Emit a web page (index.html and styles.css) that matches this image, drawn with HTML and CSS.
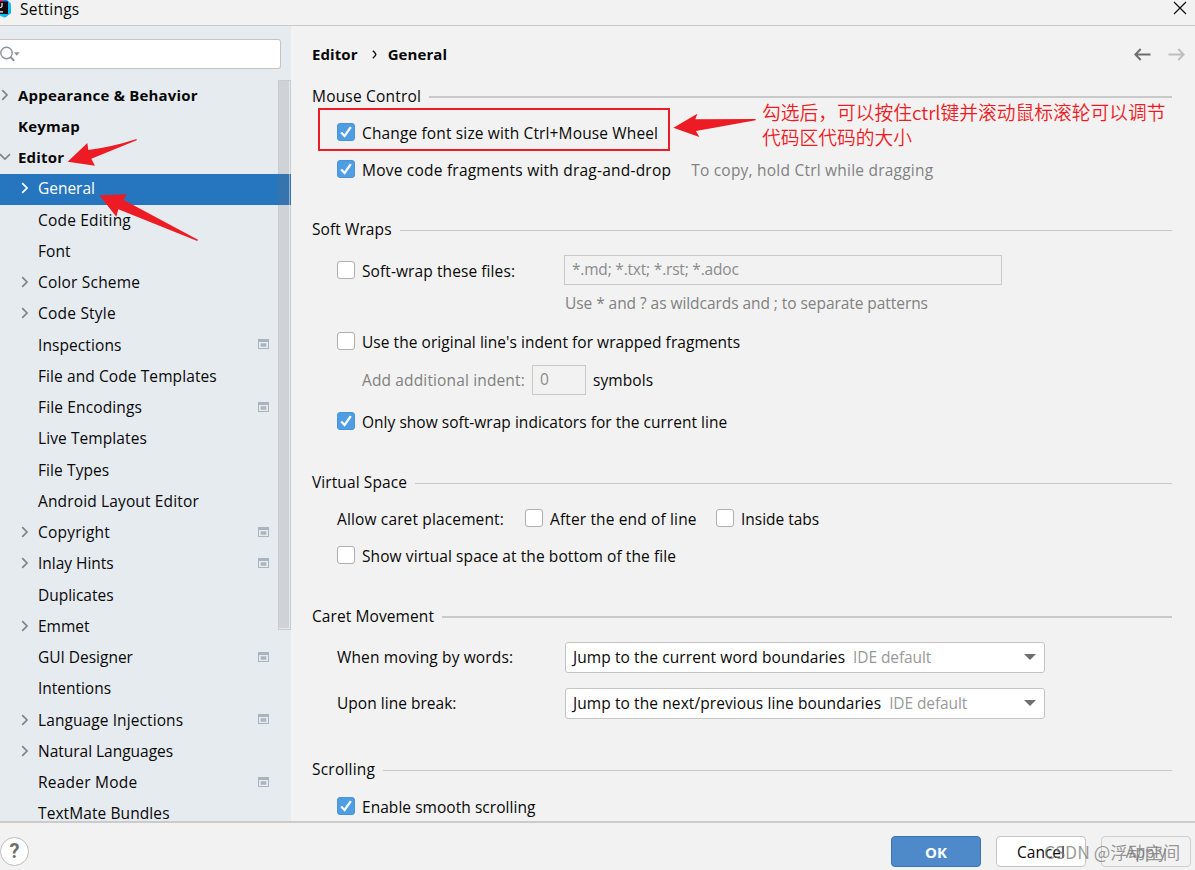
FILE: index.html
```html
<!DOCTYPE html>
<html lang="en">
<head>
<meta charset="utf-8">
<title>Settings</title>
<link rel="stylesheet" href="styles.css">
</head>
<body>
<svg class="defs" width="0" height="0" aria-hidden="true">
  <symbol id="chev" viewBox="0 0 8 12"><path d="M1.2 1.2 6 6 1.2 10.8" fill="none" stroke="currentColor" stroke-width="1.7"/></symbol>
  <symbol id="chev-down" viewBox="0 0 12 8"><path d="M1 1.2 6 6 11 1.2" fill="none" stroke="currentColor" stroke-width="1.7"/></symbol>
  <symbol id="project" viewBox="0 0 11 11"><path fill="#a9b4bd" fill-rule="evenodd" d="M0 0H11V10H0ZM1 3V9H10V3Z"/><path fill="#a9b4bd" d="M2.7 4.3H8.3V7.7H2.7Z"/></symbol>
  <symbol id="tick" viewBox="1 1 16 16"><path d="M4.2 9.5 7.6 13 13.8 4.2" fill="none" stroke="#fff" stroke-width="2.3"/></symbol>
</svg>
<div class="window">
  <header class="titlebar">
    <svg class="logo" width="11" height="18" viewBox="0 0 11 18"><path fill="#087cfa" d="M0 0H7L10.5 3.5 11 13 5 17.5 0 15Z"/><path fill="#07c3f2" d="M8 1 10.5 4V13L4 17.5 0 15.5V14L8 14Z"/><path fill="#fe2857" d="M0 0H4L0 3Z"/><path fill="#160a12" d="M0 1.5H8V14H0Z"/><path d="M2 3V6.3Q2 7.5 0 7.5M0 11.8H3" fill="none" stroke="#fff" stroke-width="1.2"/></svg>
    <span class="title">Settings</span>
    <svg class="close" width="14" height="14" viewBox="0 0 14 14"><path d="M1 1 13 13M13 1 1 13" stroke="#111" stroke-width="1.3"/></svg>
  </header>

  <div class="body">
    <aside class="sidebar">
      <div class="search">
        <svg width="20" height="17" viewBox="0 0 20 17"><circle cx="6.5" cy="7" r="5.7" fill="none" stroke="#8a949c" stroke-width="1.4"/><path d="M10.5 11 14.2 14.7" stroke="#8a949c" stroke-width="2"/><path d="M14 6.3H19.6L16.8 9.8Z" fill="#8a949c"/></svg>
      </div>
      <div class="tree">
        <div class="node top"><svg class="exp"><use href="#chev"/></svg><span>Appearance &amp; Behavior</span></div>
        <div class="node top"><span>Keymap</span></div>
        <div class="node top"><svg class="exp down"><use href="#chev-down"/></svg><span>Editor</span></div>
        <div class="node selected"><svg class="exp"><use href="#chev"/></svg><span class="tight">General</span></div>
        <div class="node"><span class="ls19">Code Editing</span></div>
        <div class="node"><span>Font</span></div>
        <div class="node"><svg class="exp"><use href="#chev"/></svg><span class="ls19">Color Scheme</span></div>
        <div class="node"><svg class="exp"><use href="#chev"/></svg><span class="ls22">Code Style</span></div>
        <div class="node"><span>Inspections</span><svg class="proj"><use href="#project"/></svg></div>
        <div class="node"><span>File and Code Templates</span></div>
        <div class="node"><span class="ls14">File Encodings</span><svg class="proj"><use href="#project"/></svg></div>
        <div class="node"><span>Live Templates</span></div>
        <div class="node"><span>File Types</span></div>
        <div class="node"><span class="ls14">Android Layout Editor</span></div>
        <div class="node"><svg class="exp"><use href="#chev"/></svg><span class="ls22">Copyright</span><svg class="proj"><use href="#project"/></svg></div>
        <div class="node"><svg class="exp"><use href="#chev"/></svg><span class="tight">Inlay Hints</span><svg class="proj"><use href="#project"/></svg></div>
        <div class="node"><span class="tight">Duplicates</span></div>
        <div class="node"><svg class="exp"><use href="#chev"/></svg><span class="tight">Emmet</span></div>
        <div class="node"><span class="tight">GUI Designer</span><svg class="proj"><use href="#project"/></svg></div>
        <div class="node"><span class="tight">Intentions</span></div>
        <div class="node"><svg class="exp"><use href="#chev"/></svg><span>Language Injections</span><svg class="proj"><use href="#project"/></svg></div>
        <div class="node"><svg class="exp"><use href="#chev"/></svg><span class="tight">Natural Languages</span></div>
        <div class="node"><span class="ls22">Reader Mode</span><svg class="proj"><use href="#project"/></svg></div>
        <div class="node"><span>TextMate Bundles</span></div>
        <div class="scrollbar"></div>
      </div>
    </aside>

    <main class="content">
      <div class="crumbs">
        <span>Editor</span><svg class="crumb-sep" width="5" height="9" viewBox="0 0 5 9"><path d="M.8.8Q3.8 3.5 3.8 4.5T.8 8.2" fill="none" stroke="#111" stroke-width="1.4"/></svg><span>General</span>
        <div class="nav">
          <svg width="17" height="13" viewBox="0 0 17 13"><path d="M16.5 6.5H1.5M6.7 1 1.3 6.5 6.7 12" fill="none" stroke="#6e6e6e" stroke-width="2"/></svg>
          <svg width="17" height="13" viewBox="0 0 17 13"><path d="M.5 6.5H15.5M10.3 1 15.7 6.5 10.3 12" fill="none" stroke="#bebebe" stroke-width="2"/></svg>
        </div>
      </div>

      <section>
        <h2 class="head thick ls19">Mouse Control</h2>
        <label class="row h46"><svg class="box on"><use href="#tick"/></svg><span class="ls14">Change font size with Ctrl+Mouse Wheel</span></label>
        <label class="row h26 low"><svg class="box on"><use href="#tick"/></svg><span class="ls22">Move code fragments with drag-and-drop</span><span class="hint after ls22">To copy, hold Ctrl while dragging</span></label>
      </section>

      <section class="gap33">
        <h2 class="head">Soft Wraps</h2>
        <div class="row soft"><span class="box"></span><span class="label-col">Soft-wrap these files:</span><span class="field wide">*.md; *.txt; *.rst; *.adoc</span></div>
        <div class="row wild hint">Use * and ? as wildcards and ; to separate patterns</div>
        <label class="row original"><span class="box"></span><span class="ls04">Use the original line's indent for wrapped fragments</span></label>
        <div class="row indent"><span class="hint ls14">Add additional indent:</span><span class="field small">0</span><span>symbols</span></div>
        <label class="row h52"><svg class="box on"><use href="#tick"/></svg><span class="ls02">Only show soft-wrap indicators for the current line</span></label>
      </section>

      <section class="gap20">
        <h2 class="head">Virtual Space</h2>
        <div class="row h46"><span class="caret-label ls14">Allow caret placement:</span><span class="box"></span><span class="end-label ls14">After the end of line</span><span class="box"></span><span class="tight">Inside tabs</span></div>
        <label class="row h28"><span class="box"></span><span>Show virtual space at the bottom of the file</span></label>
      </section>

      <section class="gap32">
        <h2 class="head thick">Caret Movement</h2>
        <div class="row h54"><span class="combo-label ls14">When moving by words:</span><div class="combo"><span>Jump to the current word boundaries</span><em>IDE default</em><i></i></div></div>
        <div class="row h38"><span class="combo-label ls02">Upon line break:</span><div class="combo"><span>Jump to the next/previous line boundaries</span><em>IDE default</em><i></i></div></div>
      </section>

      <section class="gap33">
        <h2 class="head ls22">Scrolling</h2>
        <label class="row h48"><svg class="box on"><use href="#tick"/></svg><span class="ls04">Enable smooth scrolling</span></label>
      </section>
    </main>
  </div>

  <footer class="footer">
    <span class="help">?</span>
    <button class="btn primary">OK</button>
    <button class="btn">Cancel</button>
    <button class="btn disabled">Apply</button>
  </footer>

  <div class="frame"></div>
  <svg class="arrows" viewBox="0 0 3585 2610"><path fill="#ed1c24" d="M203 485 262 429 265 450Q340 440 410 417V421L274 476 285 497ZM298 586 381 583 370 599 594 719 592 723 355 628 349 650ZM2020 383 2092 341 2086 358 2267 357V361L2088 393 2098 411Z"/></svg>
  <p class="note">勾选后，可以按住ctrl键并滚动鼠标滚轮可以调节<br>代码区代码的大小</p>
  <span class="watermark">CSDN @浮动空间</span>
</div>
</body>
</html>
```
FILE: styles.css
```css
* { box-sizing: border-box; }
body {
  margin: 0;
  background: #f2f2f2;
  color: #080808;
  font: 15.5px/20px "Open Sans", "Noto Sans CJK SC", sans-serif;
  letter-spacing: .09px;
}
.defs { position: absolute; }
.window {
  position: relative;
  width: 1195px;
  height: 870px;
  overflow: hidden;
  display: flex;
  flex-direction: column;
  white-space: nowrap;
}

/* title bar */
.titlebar {
  flex: none;
  height: 26px;
  border-bottom: 1px solid #c9c9c9;
  display: flex;
  align-items: flex-start;
}
.title { margin-left: 9px; line-height: 18px; letter-spacing: .25px; }
.close { margin: 1px 8px 0 auto; }

.body { height: 795px; display: flex; overflow: hidden; }

/* sidebar */
.sidebar { width: 291px; flex: none; background: #e6ebf0; padding-top: 13px; }
.search {
  width: 281px;
  height: 30px;
  background: #fff;
  border: 1px solid #c4c4c4;
  border-left: 0;
  border-radius: 0 3px 3px 0;
  display: flex;
  align-items: center;
}
.tree { position: relative; margin-top: 11px; }
.node {
  height: 31.25px;
  padding: 0 21px 2px 38px;
  display: flex;
  align-items: center;
  position: relative;
}
.node.top { padding-left: 18px; font-weight: 700; font-size: 15px; letter-spacing: .2px; }
.tight { letter-spacing: -.02px; }
.selected { background: #2675bf; color: #fff; }
.exp { width: 8px; height: 12px; color: #7f8487; margin-left: -17px; margin-right: 9px; flex: none; }
.exp.down { width: 12px; height: 8px; margin-left: -19px; margin-right: 7px; }
.selected .exp { color: #fff; }
.proj { width: 11px; height: 11px; margin-left: auto; margin-right: 1px; }
.scrollbar {
  position: absolute;
  right: 0;
  top: 0;
  width: 13px;
  height: 550px;
  background: rgba(115, 115, 115, .2);
  border: 1px solid rgba(115, 115, 115, .07);
  box-shadow: inset -1px -1px 0 rgba(255, 255, 255, .45);
}

/* settings page */
.content { width: 881px; padding-left: 21px; }
.crumbs { height: 56px; display: flex; align-items: center; font-weight: 700; font-size: 15px; }
.crumb-sep { margin: 1px 11px 0 14px; }
.nav { margin: 0 -13px 0 auto; display: flex; gap: 17px; }
.head { margin: 0; height: 28px; display: flex; align-items: center; font: inherit; gap: 8px; }
.head::after { content: ""; flex: 1; height: 1px; background: #c9c9c9; margin-top: 2px; }
.head.thick::after { height: 2px; }
.row { display: flex; align-items: center; padding-left: 25px; }
.low { padding-top: 1px; }
.h26 { height: 26px; }
.h28 { height: 28px; }
.h38 { height: 38px; }
.h46 { height: 46px; }
.h48 { height: 48px; }
.h52 { height: 52px; }
.h54 { height: 54px; }
.gap20 { margin-top: 20px; }
.gap32 { margin-top: 32px; }
.gap33 { margin-top: 33px; }
.ls02 { letter-spacing: .025px; }
.ls04 { letter-spacing: .045px; }
.ls14 { letter-spacing: .14px; }
.ls19 { letter-spacing: .19px; }
.ls22 { letter-spacing: .22px; }

.box {
  width: 18px;
  height: 18px;
  flex: none;
  margin: -2px 7.5px 0 -.5px;
  background: #fff;
  border: 1px solid #b0b0b0;
  border-radius: 3px;
}
.box.on { background: #4f9de3; border-color: #4a93d6; }
.hint { color: #818181; }
.after { margin-left: 20px; }
.label-col { width: 202px; }
.field {
  height: 30px;
  border: 1px solid #c9c9c9;
  color: #8c8c8c;
  padding: 0 7px;
  line-height: 27px;
}
.wide { width: 438px; margin-top: -2px; letter-spacing: -.2px; }
.small { width: 54px; margin: 0 7px; }
.soft { height: 56px; }
.wild { height: 18px; margin-top: -5px; margin-bottom: 2px; padding: 0 0 0 253px; letter-spacing: -.06px; }
.original { height: 55px; }
.indent { height: 20px; padding-left: 50px; margin: 1px 0 6px; }
.caret-label { width: 188px; }
.end-label { width: 166px; }
.combo-label { width: 228px; }
.combo {
  width: 480px;
  height: 31px;
  border: 1px solid #c4c4c4;
  border-radius: 3px;
  background: #fff;
  display: flex;
  align-items: center;
  padding: 0 8px 0 7px;
}
.combo em { font-style: normal; color: #999; margin-left: 8px; letter-spacing: -.1px; }
.combo i { margin-left: auto; border: 6px solid transparent; border-top: 6px solid #6e6e6e; border-bottom: 0; }

/* footer */
.footer {
  flex: none;
  height: 49px;
  border-top: 2px solid #cbcbcb;
  display: flex;
  align-items: center;
  padding: 9px 4px 0 0;
}
.help {
  width: 29px;
  height: 29px;
  border: 1px solid #bdbdbd;
  border-radius: 50%;
  background: #fff;
  color: #6e6e6e;
  font: 700 20px/27px Roboto, sans-serif;
  text-align: center;
  margin-right: auto;
}
.btn {
  width: 90px;
  height: 31px;
  margin-left: 15px;
  border: 1px solid #c4c4c4;
  border-radius: 4px;
  background: #fff;
  color: #080808;
  font: inherit;
  padding: 2px 0 0;
}
.primary { background: #4e8ac9; border-color: #3d75b2; color: #fff; font-weight: 700; font-size: 15px; }
.disabled { background: transparent; color: #8c8c8c; border-color: #cfcfcf; }

/* annotations over the window */
.frame { position: absolute; left: 318px; top: 108px; width: 352px; height: 43px; border: 2px solid #ed1c24; }
.arrows { position: absolute; inset: 0; width: 1195px; height: 870px; pointer-events: none; }
.note {
  position: absolute;
  left: 762px;
  top: 100px;
  margin: 0;
  color: #ed1c24;
  font: 350 18.75px/24.5px "Noto Sans CJK SC", sans-serif;
  letter-spacing: 0;
}
.watermark {
  position: absolute;
  left: 1044px;
  top: 841px;
  color: rgba(120, 120, 120, .75);
  font: 17.5px/22px "Noto Sans CJK SC", sans-serif;
  letter-spacing: 0;
}
```
